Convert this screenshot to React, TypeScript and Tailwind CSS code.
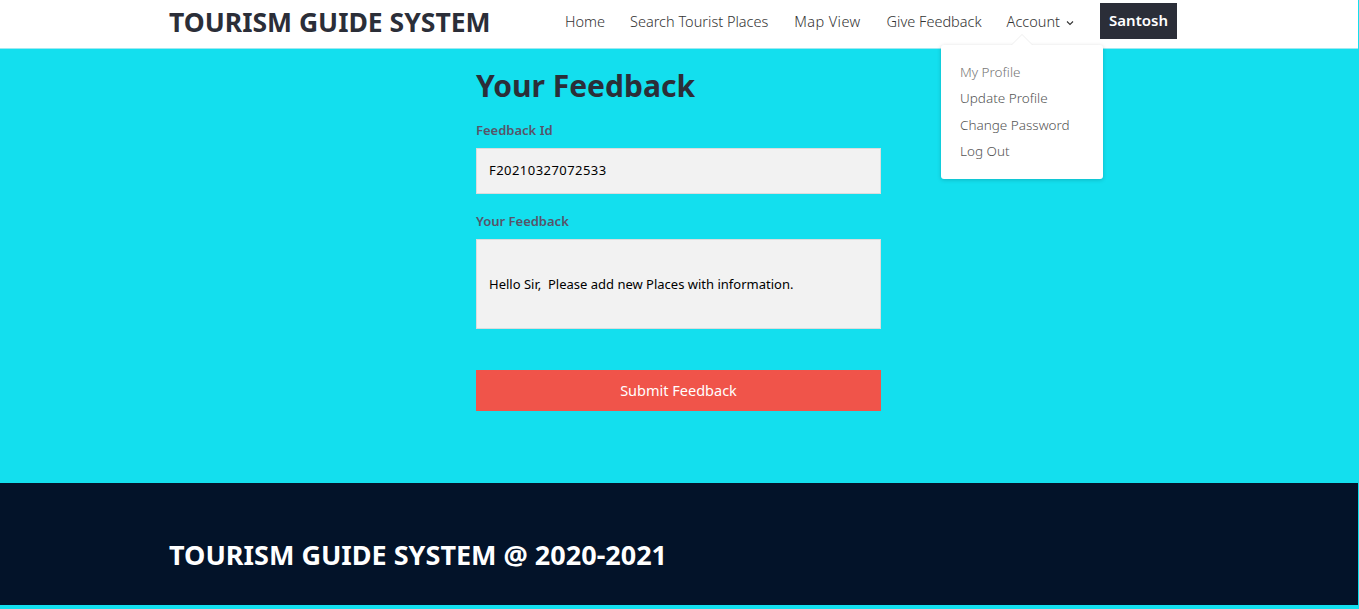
import React from "react";

const font = { fontFamily: '"Noto Sans", "Open Sans", sans-serif' };

export default function App() {
  return (
    <div className="w-[1359px] min-h-[609px] bg-[#13dfee]" style={font}>
      {/* Navbar */}
      <header className="relative h-[49px] bg-white border-b border-[#9ee8f0] w-[1358px]">
        <div className="flex items-center h-[48px] pl-[169px] w-[1177px] justify-between">
          <div className="text-[26.5px] font-bold text-[#2b2e38] leading-none mb-[4px]">TOURISM GUIDE SYSTEM</div>
          <nav className="flex items-center text-[14.5px] text-[#333] font-light mb-[4px]">
            <span className="mr-[25px]">Home</span>
            <span className="mr-[26px]">Search Tourist Places</span>
            <span className="mr-[26px] tracking-[0.4px]">Map View</span>
            <span className="mr-[25px]">Give Feedback</span>
            <span className="flex items-center mr-[26px]">
              Account
              <svg width="8" height="6" viewBox="0 0 8 6" className="ml-[6px] mt-[2px]">
                <path d="M1 1.5 L4 4.5 L7 1.5" fill="none" stroke="#333" strokeWidth="1.1" />
              </svg>
            </span>
            <span className="bg-[#2b2e38] text-white font-semibold h-[36px] w-[77px] flex items-center justify-center text-[15px] mb-[2px] pb-[1px]">Santosh</span>
          </nav>
        </div>
        {/* dropdown */}
        <div className="absolute left-[941px] top-[45px] w-[162px] h-[134px] bg-white rounded-[3px] shadow-[0_1px_4px_rgba(0,0,0,0.18)] z-10 pt-[17px] pl-[19px] text-[13.5px] text-[#555] font-light">
          <div className="absolute -top-[11px] left-[70px] w-0 h-0 border-l-[11px] border-r-[11px] border-b-[11px] border-l-transparent border-r-transparent border-b-[#eeeeee]" />
          <div className="absolute -top-[10px] left-[71px] w-0 h-0 border-l-[10px] border-r-[10px] border-b-[10px] border-l-transparent border-r-transparent border-b-white" />
          <div className="h-[26.3px] text-[#777]">My Profile</div>
          <div className="h-[26.3px]">Update Profile</div>
          <div className="h-[26.3px]">Change Password</div>
          <div className="h-[26.3px]">Log Out</div>
        </div>
      </header>

      {/* Main */}
      <main className="h-[434px] w-[1358px] flex justify-center">
        <div className="w-[405px] ml-[-1px] pt-[17px]">
          <h1 className="text-[30px] font-bold text-[#2b2e38] leading-[40px]">Your Feedback</h1>
          <label className="block mt-[15px] text-[13px] font-semibold text-[#575469] leading-[18px]">Feedback Id</label>
          <div className="mt-[9px] h-[46px] bg-[#f2f2f2] border border-[#dcdcdc] flex items-center pl-[12px] text-[13px] text-black tracking-[0.45px]">
            F20210327072533
          </div>
          <label className="block mt-[18px] text-[13px] font-semibold text-[#575469] leading-[18px]">Your Feedback</label>
          <div className="mt-[9px] h-[90px] bg-[#f2f2f2] border border-[#dcdcdc] flex items-center pl-[12px] pt-[2px] text-[13px] text-black whitespace-pre">
            {"Hello Sir,  Please add new Places with information."}
          </div>
          <button className="mt-[41px] w-full h-[41px] bg-[#f0544a] text-white text-[14.5px] font-normal">Submit Feedback</button>
        </div>
      </main>

      {/* Footer */}
      <footer className="h-[124px] w-[1358px] bg-[#031329] flex items-center pl-[169px] border-b-2 border-[#13dfee]">
        <div className="text-[27px] font-bold text-white mt-[23px]">TOURISM GUIDE SYSTEM @ 2020-2021</div>
      </footer>
    </div>
  );
}
